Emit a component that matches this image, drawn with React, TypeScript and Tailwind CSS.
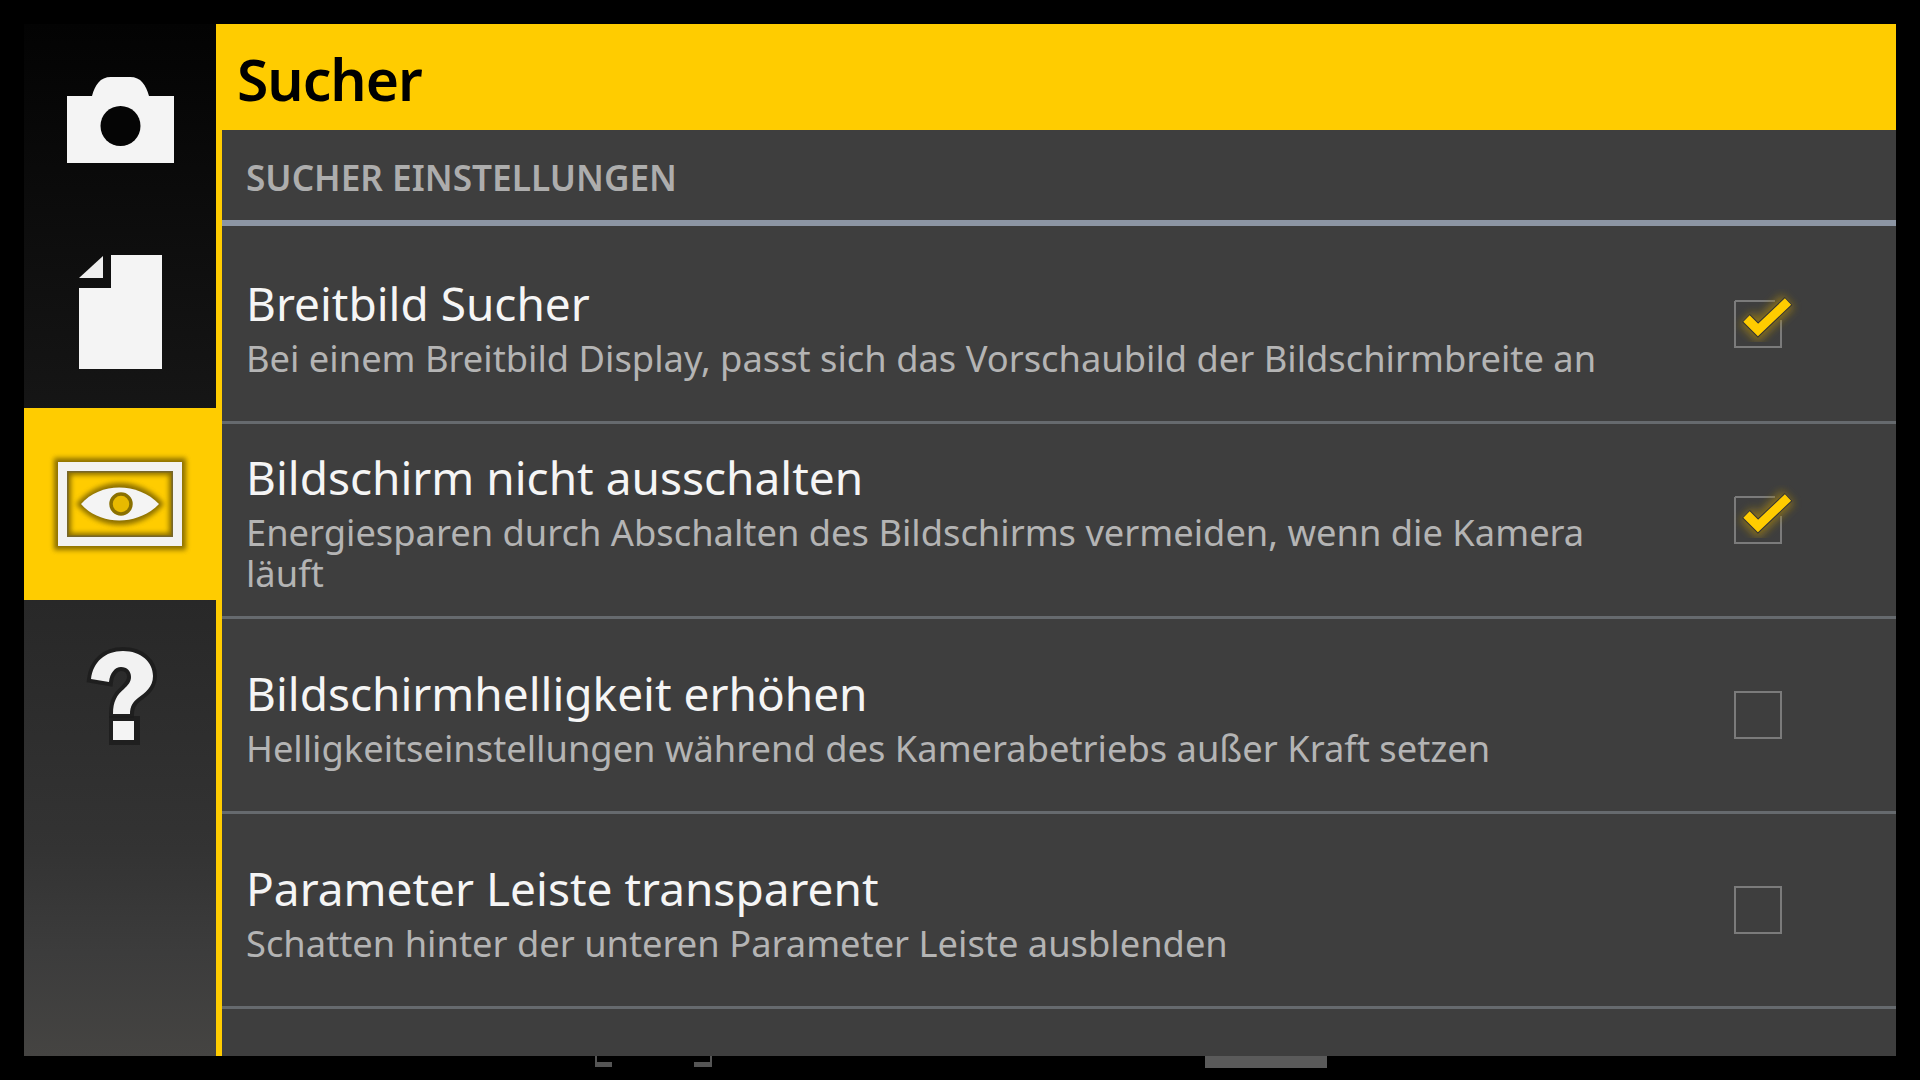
const rows = [
  { t: "Breitbild Sucher", s: "Bei einem Breitbild Display, passt sich das Vorschaubild der Bildschirmbreite an", c: true, h: "h-[198px]", p: "pb-0" },
  { t: "Bildschirm nicht ausschalten", s: "Energiesparen durch Abschalten des Bildschirms vermeiden, wenn die Kamera läuft", c: true, h: "h-[195px]", p: "pb-1" },
  { t: "Bildschirmhelligkeit erhöhen", s: "Helligkeitseinstellungen während des Kamerabetriebs außer Kraft setzen", c: false, h: "h-[195px]", p: "pb-[2px]" },
  { t: "Parameter Leiste transparent", s: "Schatten hinter der unteren Parameter Leiste ausblenden", c: false, h: "h-[195px]", p: "pb-[2px]" },
];

function Check({ on }: { on: boolean }) {
  return (
    <svg width="72" height="72" viewBox="0 0 72 72" className="overflow-visible">
      <defs>
        <filter id="glow" x="-40%" y="-40%" width="180%" height="180%">
          <feGaussianBlur stdDeviation="4" />
        </filter>
      </defs>
      {on ? (
        <>
          <path d="M13 13H53M59 32V59H13V13" fill="none" stroke="#7b7b7b" strokeWidth="2" />
          <path d="M24 30L36 42L66 13" fill="none" stroke="#9a7c18" strokeWidth="18" filter="url(#glow)" opacity="0.8" />
          <path d="M24 30L36 42L66.500 13" fill="none" stroke="#333333" strokeWidth="11" />
          <path d="M24.500 30.500L36 42L66 13.500" fill="none" stroke="#ffcc00" strokeWidth="9" />
        </>
      ) : (
        <rect x="13" y="13" width="46" height="46" fill="none" stroke="#7b7b7b" strokeWidth="2" />
      )}
    </svg>
  );
}

function Camera() {
  return (
    <svg width="107" height="86" viewBox="0 0 107 86">
      <path d="M0 19H25C28 8 33 0 44 0H63C74 0 79 8 82 19H107V86H0Z" fill="#f4f4f4" />
      <circle cx="53.500" cy="49" r="20" fill="#050505" />
    </svg>
  );
}

function Doc() {
  return (
    <svg width="83" height="114" viewBox="0 0 83 114">
      <path d="M0 33H32V0H83V114H0Z" fill="#f4f4f4" />
      <path d="M0 23L24 1V23Z" fill="#eeeeee" />
    </svg>
  );
}

function Eye() {
  return (
    <svg width="140" height="100" viewBox="0 0 140 100" className="overflow-visible">
      <defs>
        <filter id="dark" x="-20%" y="-20%" width="140%" height="140%">
          <feGaussianBlur stdDeviation="2.500" />
        </filter>
      </defs>
      <g filter="url(#dark)" opacity="0.8">
        <rect x="12.500" y="12.500" width="115" height="75" fill="none" stroke="#6e5800" strokeWidth="17" />
        <path d="M26 50C50 22 90 22 114 50C90 78 50 78 26 50Z" fill="#6e5800" />
      </g>
      <rect x="17.500" y="17.500" width="105" height="65" fill="none" stroke="#77662a" strokeWidth="2" />
      <rect x="12.500" y="12.500" width="115" height="75" fill="none" stroke="#f2f2f2" strokeWidth="9" />
      <path d="M31 50C50 28 88 28 109 50C88 72 50 72 31 50Z" fill="#f4f4f4" />
      <circle cx="71" cy="50" r="10" fill="#e8ba00" stroke="#8a7000" strokeWidth="3.500" />
    </svg>
  );
}

function Help() {
  const q = "M0 28C2 11 14 0 32 0C50 0 62 11 62 25C62 36 54 42 47 47C42 51 39 55 39 63H22C22 50 26 44 33 38C37 34 40 31 40 26C40 20 36 16 30 16C24 16 19 22 18 31Z";
  return (
    <svg width="63" height="90" viewBox="0 0 63 90" className="overflow-visible">
      <path d={q} fill="#1c1c1c" stroke="#1c1c1c" strokeWidth="8" opacity="0.8" />
      <rect x="18" y="65" width="31" height="29" fill="#1c1c1c" opacity="0.8" />
      <path d={q} fill="#f2f2f2" />
      <rect x="22" y="70" width="21" height="19" fill="#f4f4f4" />
    </svg>
  );
}

const font = { fontFamily: '"Noto Sans", "Open Sans", sans-serif' };

export default function App() {
  return (
    <div className="relative h-[1080px] w-[1920px] overflow-hidden bg-black p-6" style={font}>
      <div className="flex h-[1032px] w-[1872px] bg-[#3e3e3e]">
        <div className="flex w-[198px] shrink-0 flex-col border-r-[6px] border-[#ffcc00] bg-[linear-gradient(180deg,#030303_0%,#171717_40%,#282828_56%,#333333_80%,#3c3c3c_90%,#454442_100%)]">
          <div className="flex h-[192px] items-center justify-center"><Camera /></div>
          <div className="flex h-[192px] items-center justify-center"><Doc /></div>
          <div className="mr-[-6px] flex h-[192px] items-center justify-center bg-[#ffcc00] pr-[6px]"><Eye /></div>
          <div className="flex h-[192px] items-center justify-center pl-[5px]"><Help /></div>
        </div>
        <div className="flex min-w-0 flex-1 flex-col">
          <div className="flex h-[106px] items-center bg-[#ffcc00] pt-1 pl-[15px]">
            <span className="text-[57px] leading-none font-semibold tracking-[-1px] text-black">Sucher</span>
          </div>
          <div className="flex h-[96px] items-center border-b-[6px] border-[#8c95a3] pt-[6px] pl-6">
            <span className="text-[35.2px] leading-none font-semibold text-[#adadad]">SUCHER EINSTELLUNGEN</span>
          </div>
          {rows.map((r) => (
            <div key={r.t} className={`flex ${r.h} items-center border-b-[3px] border-[#666a6e] pl-6`}>
              <div className={`w-[1401px] shrink-0 ${r.p}`}>
                <div className="text-[46px] leading-[69px] text-[#f5f5f5]">{r.t}</div>
                <div className="text-[36.3px] leading-[41px] text-[#b4b4b4]">{r.s}</div>
              </div>
              <div className="ml-[75px]"><Check on={r.c} /></div>
            </div>
          ))}
        </div>
      </div>
      <div className="absolute top-[1056px] left-[595px] h-[11px] w-[2px] bg-[#555555]" />
      <div className="absolute top-[1062px] left-[595px] h-[5px] w-[17px] bg-[#555555]" />
      <div className="absolute top-[1056px] left-[710px] h-[11px] w-[2px] bg-[#555555]" />
      <div className="absolute top-[1062px] left-[694px] h-[5px] w-[17px] bg-[#555555]" />
      <div className="absolute top-[1056px] left-[1205px] h-[12px] w-[122px] bg-[#5a5a5a]" />
    </div>
  );
}
